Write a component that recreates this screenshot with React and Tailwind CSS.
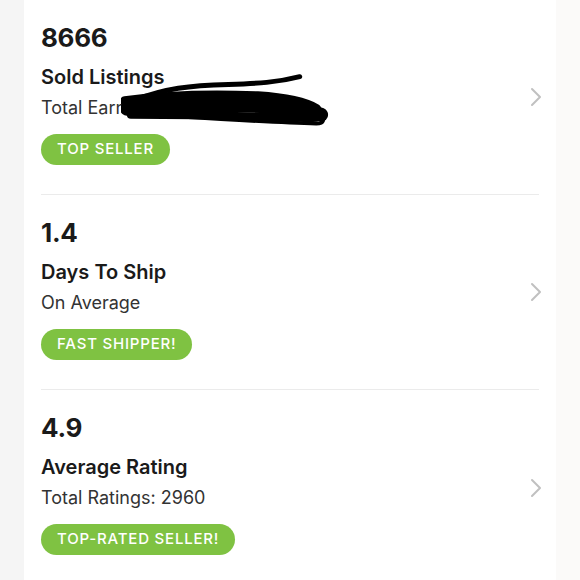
import { ChevronRight } from "lucide-react";

const stats = [
    { value: "8666", title: "Sold Listings", sub: "Total Earnings", badge: "TOP SELLER", hidden: true },
    { value: "1.4", title: "Days To Ship", sub: "On Average", badge: "FAST SHIPPER!" },
    { value: "4.9", title: "Average Rating", sub: "Total Ratings: 2960", badge: "TOP-RATED SELLER!" },
];

// marker scribble that hides the earnings amount
function Scribble() {
    return (
        <svg
            className="absolute left-[80px] top-[-24px] pointer-events-none"
            width="210"
            height="60"
            viewBox="0 0 215 60"
            fill="none"
            stroke="#000"
            strokeLinecap="round"
            strokeLinejoin="round"
        >
            <path d="M14 27 C 45 15, 70 12, 110 11 C 140 10, 160 9, 183 3" strokeWidth="5" />
            <path d="M4 28 C 40 23, 90 21, 140 23 C 170 25, 190 30, 200 36" strokeWidth="10" />
            <path d="M6 36 C 60 32, 120 31, 170 35 C 190 37, 200 40, 205 42" strokeWidth="14" />
            <path d="M10 42 C 80 42, 130 43, 180 45 C 195 46, 208 46, 205 41" strokeWidth="8" />
            <path d="M60 44 C 110 47, 160 50, 200 51 C 208 51, 209 46, 203 44" strokeWidth="4" />
        </svg>
    );
}

export default function App() {
    return (
        <div className="w-[580px] h-[580px] bg-[#fbfaf9] flex font-['Inter','Liberation_Sans',sans-serif] overflow-hidden">
            <div className="w-[24px] h-full bg-[#f5f5f5]" />
            <div className="w-[532px] h-full bg-white">
                {stats.map((s, i) => (
                    <div key={s.title} className="pl-[17px] pr-[17px]">
                        <div className={`h-[195px] flex ${i < 2 ? "border-b border-[#ebebeb]" : ""}`}>
                            <div className="flex-1 pt-[23px]">
                                <div className="text-[26px] leading-[30px] font-bold tracking-[-0.3px] text-[#1a1a1a]">{s.value}</div>
                                <div className="mt-[12px] text-[20px] leading-[24px] font-semibold text-[#1a1a1a]">{s.title}</div>
                                <div className="relative mt-[8px] text-[18px] leading-[22px] text-[#333]">
                                    {s.sub}
                                    {s.hidden && <Scribble />}
                                </div>
                                <div className="mt-[15px] inline-flex h-[31px] items-center rounded-full bg-[#7fc242] px-[16px] text-[15px] font-medium tracking-[0.8px] text-white">
                                    {s.badge}
                                </div>
                            </div>
                            <ChevronRight className="self-center mr-[-13px] text-[#c0c0c0]" size={32} strokeWidth={1.5} />
                        </div>
                    </div>
                ))}
            </div>
        </div>
    );
}
